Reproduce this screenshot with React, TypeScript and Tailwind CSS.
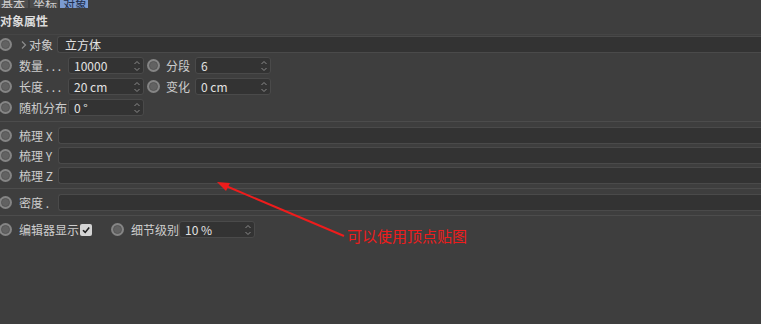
import React from "react";

const Radio = ({ className = "" }: { className?: string }) => (
  <div className={"w-[13px] h-[13px] rounded-full bg-[#858585] flex items-center justify-center shrink-0 " + className}>
    <div className="w-[9px] h-[9px] rounded-full bg-[#626262] border border-[#565656]" />
  </div>
);

const Spin = () => (
  <svg width="8" height="14" viewBox="0 0 8 14" className="shrink-0">
    <path d="M1.5 5 L4 2.5 L6.5 5" fill="none" stroke="#8a8a8a" strokeWidth="1" />
    <path d="M1.5 9 L4 11.5 L6.5 9" fill="none" stroke="#8a8a8a" strokeWidth="1" />
  </svg>
);

const NumField = ({ value, w = "w-[76px]" }: { value: string; w?: string }) => (
  <div className={`${w} h-[17px] rounded-[3px] bg-[#333333] border border-[#4a4a4a] flex items-center pl-[5px] pr-[2px] text-[#e2e2e2] shrink-0`}>
    <span className="flex-1 leading-none whitespace-nowrap">{value}</span>
    <Spin />
  </div>
);

const WideField = ({ value = "" }: { value?: string }) => (
  <div className="flex-1 h-[17px] rounded-l-[3px] bg-[#333333] border border-r-0 border-[#4a4a4a] flex items-center pl-[7px] text-[#e2e2e2]">
    {value}
  </div>
);

const Sep = () => <div className="h-px bg-[#4c4c4c] my-0" />;

export default function App() {
  return (
    <div
      className="relative w-[761px] h-[324px] overflow-hidden bg-[#3e3e3e] text-[12px] text-[#cdcdcd] whitespace-nowrap"
      style={{ fontFamily: "'Noto Sans CJK SC', 'Noto Sans', sans-serif" }}
    >
      {/* tabs (cut off at top) */}
      <div className="h-[8px] overflow-hidden flex gap-[2px]">
        <div className="w-[28px] h-[8px] bg-[#4e4e4e] relative overflow-hidden">
          <span className="absolute left-[1px] bottom-[-2px] leading-none text-[12px] text-[#cfcfcf]">基本</span>
        </div>
        <div className="w-[28px] h-[8px] bg-[#4a4a4a] relative overflow-hidden">
          <span className="absolute left-[3px] bottom-[-2px] leading-none text-[12px] text-[#cfcfcf]">坐标</span>
        </div>
        <div className="w-[28px] h-[8px] bg-[#7b9bd1] relative overflow-hidden">
          <span className="absolute left-[3px] bottom-[-2px] leading-none text-[12px] text-[#1f2e4a]">对象</span>
        </div>
      </div>

      <div className="h-[26px] flex items-center font-bold text-[12px] text-[#dcdcdc] leading-none">对象属性</div>

      <div className="h-[1px] bg-[#454545]" />
      {/* 对象 row */}
      <div className="h-[17px] mt-[1px] flex items-center">
        <Radio className="-ml-[1px]" />
        <svg width="6" height="10" viewBox="0 0 6 10" className="ml-[9px] shrink-0">
          <path d="M1 1.5 L4.5 5 L1 8.5" fill="none" stroke="#8c8c8c" strokeWidth="1.2" />
        </svg>
        <span className="ml-[2px] w-[28px] shrink-0">对象</span>
        <WideField value="立方体" />
      </div>

      <div className="mt-[4px] flex flex-col gap-[4px]">
        <div className="h-[17px] flex items-center">
          <Radio className="-ml-[1px]" />
          <span className="ml-[7px] w-[49px] shrink-0">数量 . . .</span>
          <NumField value="10000" />
          <Radio className="ml-[3px]" />
          <span className="ml-[6px] w-[29px] shrink-0">分段</span>
          <NumField value="6" />
        </div>
        <div className="h-[17px] flex items-center">
          <Radio className="-ml-[1px]" />
          <span className="ml-[7px] w-[49px] shrink-0">长度 . . .</span>
          <NumField value="20 cm" />
          <Radio className="ml-[3px]" />
          <span className="ml-[6px] w-[29px] shrink-0">变化</span>
          <NumField value="0 cm" />
        </div>
        <div className="h-[17px] flex items-center">
          <Radio className="-ml-[1px]" />
          <span className="ml-[7px] w-[49px] shrink-0">随机分布</span>
          <NumField value="0 °" />
        </div>
      </div>

      <div className="mt-[5px]"><Sep /></div>

      <div className="mt-[5px] flex flex-col gap-[3px]">
        {["梳理 X", "梳理 Y", "梳理 Z"].map((t) => (
          <div key={t} className="h-[17px] flex items-center">
            <Radio className="-ml-[1px]" />
            <span className="ml-[7px] w-[39px] shrink-0">{t}</span>
            <WideField />
          </div>
        ))}
      </div>

      <div className="mt-[4px]"><Sep /></div>

      <div className="mt-[5px] h-[17px] flex items-center">
        <Radio className="-ml-[1px]" />
        <span className="ml-[7px] w-[39px] shrink-0">密度 .</span>
        <WideField />
      </div>

      <div className="mt-[4px]"><Sep /></div>

      <div className="mt-[5px] h-[17px] flex items-center">
        <Radio className="-ml-[1px]" />
        <span className="ml-[7px] shrink-0">编辑器显示</span>
        <div className="ml-[1px] w-[12px] h-[12px] rounded-[2px] bg-[#d4d4d4] flex items-center justify-center shrink-0">
          <svg width="10" height="10" viewBox="0 0 10 10">
            <path d="M2 5.2 L4.2 7.4 L8.2 2.6" fill="none" stroke="#1e1e1e" strokeWidth="1.6" />
          </svg>
        </div>
        <Radio className="ml-[19px]" />
        <span className="ml-[7px] w-[48px] shrink-0">细节级别</span>
        <NumField value="10 %" />
      </div>

      {/* annotation */}
      <svg className="absolute left-0 top-0 pointer-events-none" width="761" height="324">
        <line x1="344" y1="236" x2="226" y2="186" stroke="#ee1c1c" strokeWidth="2" />
        <polygon points="217,182 230,183 226,191" fill="#ee1c1c" />
      </svg>
      <div className="absolute left-[347px] top-[227px] text-[15px] leading-[18px] text-[#ee1c1c]">可以使用顶点贴图</div>
    </div>
  );
}
